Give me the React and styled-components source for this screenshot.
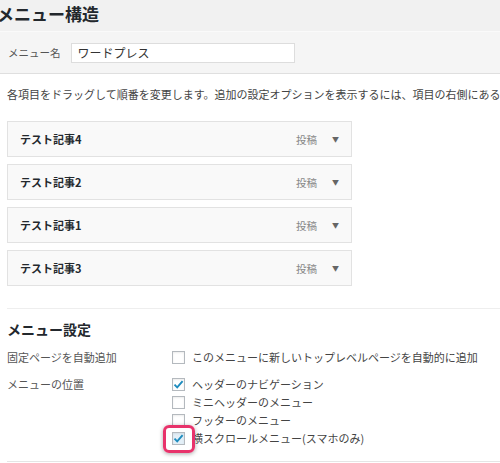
import React from 'react'
import styled, { createGlobalStyle } from 'styled-components'

const Global = createGlobalStyle`
  html, body { margin: 0; padding: 0; background: #fff; }
  body {
    font-family: "Noto Sans CJK JP", "Noto Sans", sans-serif;
    color: #444;
    width: 500px;
    overflow: hidden;
  }
`

const Page = styled.div`
  width: 500px;
  height: 463px;
  overflow: hidden;
`

const TitleBar = styled.div`
  height: 32px;
  background: #f1f1f1;
  border-bottom: 1px solid #fafafa;
  padding-top: 3px;
  box-sizing: border-box;
`

const Title = styled.h2`
  margin: 0 0 0 -3px;
  font-size: 17px;
  line-height: 22px;
  font-weight: 700;
  color: #23282d;
`

const NameBar = styled.div`
  height: 42px;
  box-sizing: border-box;
  background: #f5f5f5;
  border-bottom: 1px solid #dfdfdf;
  display: flex;
  align-items: center;
  gap: 10px;
  padding: 0 0 0 8px;
`

const Label = styled.span`
  font-size: 10.5px;
  color: #555;
  white-space: nowrap;
`

const NameInput = styled.div`
  width: 224px;
  height: 20px;
  box-sizing: border-box;
  background: #fff;
  border: 1px solid #ddd;
  font-size: 12px;
  line-height: 18px;
  padding-left: 6px;
  color: #333;
`

const Body = styled.div`
  padding-left: 7px;
`

const Desc = styled.p`
  margin: 0;
  padding-top: 14px;
  font-size: 11px;
  line-height: 13px;
  white-space: nowrap;
  color: #444;
`

const ItemList = styled.div`
  margin-top: 20px;
  display: flex;
  flex-direction: column;
  gap: 7px;
`

const Item = styled.div`
  width: 345px;
  height: 36px;
  box-sizing: border-box;
  background: #f9f9f9;
  border: 1px solid #e2e2e2;
  display: flex;
  align-items: center;
  padding: 0 12px 0 12px;
`

const ItemTitle = styled.span`
  flex: 1;
  font-size: 11px;
  font-weight: 700;
  color: #23282d;
`

const ItemType = styled.span`
  font-size: 10.5px;
  color: #888;
  margin-right: 15px;
`

const Arrow = styled.span`
  font-size: 7px;
  color: #666;
`

const Divider = styled.div`
  margin-top: 22px;
  height: 1px;
  background: #eee;
`

const SectionTitle = styled.h3`
  margin: 10px 0 0 0;
  font-size: 14px;
  line-height: 20px;
  font-weight: 700;
  color: #23282d;
`

const SettingRow = styled.div`
  display: flex;
  margin-top: ${p => p.$gap}px;
`

const RowLabel = styled.div`
  width: 165px;
  flex-shrink: 0;
  font-size: 11px;
  line-height: 18px;
  color: #555;
`

const Options = styled.div`
  display: flex;
  flex-direction: column;
`

const Option = styled.div`
  display: flex;
  align-items: center;
  height: 18px;
  gap: 7px;
  font-size: 11px;
  color: #444;
  white-space: nowrap;
`

const BoxWrap = styled.span`
  position: relative;
  display: inline-flex;
`

const Box = styled.span`
  width: 13px;
  height: 13px;
  box-sizing: border-box;
  border: 1px solid #b4b9be;
  background: ${p => (p.$focus ? '#e3eff7' : '#fff')};
  box-shadow: inset 0 1px 2px rgba(0, 0, 0, 0.08);
  display: inline-flex;
  align-items: center;
  justify-content: center;
`

const Highlight = styled.span`
  position: absolute;
  left: -9px;
  top: -7px;
  width: 32px;
  height: 28px;
  box-sizing: border-box;
  border: 3.5px solid #e8336b;
  border-radius: 6px;
  box-shadow: 0 1px 4px rgba(0, 0, 0, 0.35);
`

const BottomLine = styled.div`
  margin-top: 14px;
  height: 1px;
  background: #e5e5e5;
`

function Check({ checked, focus }) {
  return (
    <BoxWrap>
      <Box $focus={focus}>
        {checked && (
          <svg width="11" height="11" viewBox="0 0 11 11">
            <path d="M1.5 5.6 L4.2 8.3 L9.6 2.2" fill="none" stroke="#1e8cbe" strokeWidth="1.9" />
          </svg>
        )}
      </Box>
      {focus && <Highlight />}
    </BoxWrap>
  )
}

const items = ['テスト記事4', 'テスト記事2', 'テスト記事1', 'テスト記事3']

const locations = [
  { label: 'ヘッダーのナビゲーション', checked: true },
  { label: 'ミニヘッダーのメニュー' },
  { label: 'フッターのメニュー' },
  { label: '横スクロールメニュー(スマホのみ)', checked: true, focus: true },
]

export default function App() {
  return (
    <Page>
      <Global />
      <TitleBar>
        <Title>メニュー構造</Title>
      </TitleBar>
      <NameBar>
        <Label>メニュー名</Label>
        <NameInput>ワードプレス</NameInput>
      </NameBar>
      <Body>
        <Desc>各項目をドラッグして順番を変更します。追加の設定オプションを表示するには、項目の右側にある矢印をクリックしてください。</Desc>
        <ItemList>
          {items.map(t => (
            <Item key={t}>
              <ItemTitle>{t}</ItemTitle>
              <ItemType>投稿</ItemType>
              <Arrow>▼</Arrow>
            </Item>
          ))}
        </ItemList>
        <Divider />
        <SectionTitle>メニュー設定</SectionTitle>
        <SettingRow $gap={9}>
          <RowLabel>固定ページを自動追加</RowLabel>
          <Options>
            <Option>
              <Check />
              このメニューに新しいトップレベルページを自動的に追加
            </Option>
          </Options>
        </SettingRow>
        <SettingRow $gap={9}>
          <RowLabel>メニューの位置</RowLabel>
          <Options>
            {locations.map(l => (
              <Option key={l.label}>
                <Check checked={l.checked} focus={l.focus} />
                {l.label}
              </Option>
            ))}
          </Options>
        </SettingRow>
        <BottomLine />
      </Body>
    </Page>
  )
}
